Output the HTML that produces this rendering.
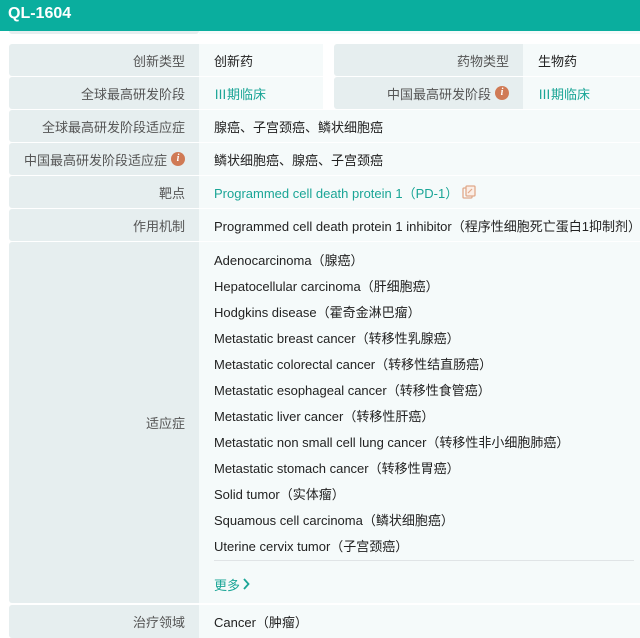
<!DOCTYPE html>
<html><head><meta charset="utf-8"><style>
*{margin:0;padding:0;box-sizing:border-box}
body{width:640px;height:636px;overflow:hidden;background:#fff;font-family:"Liberation Sans","Noto Sans CJK SC",sans-serif;font-size:13px;color:#222;position:relative}
.hdr{position:absolute;left:0;top:0;width:640px;height:31px;background:#0aae9e;color:#fff;font-weight:bold;font-size:16px;line-height:28px;padding-left:8px}
.strip{position:absolute;top:31px;left:9px;width:190px;height:3px;background:#e6eeef;border-radius:0 0 3px 3px}
.strip2{position:absolute;top:31px;left:199px;width:441px;height:3px;background:#f5fafa}
.c{position:absolute;display:flex;align-items:center}
.l{background:#e6eeef;justify-content:flex-end;padding-right:14px;color:#555;border-radius:3px 0 0 3px}
.v{background:#f5fafa;padding-left:15px}
.t{color:#1aa596}
.i{display:inline-block;width:14px;height:14px;border-radius:50%;background:#d07a55;color:#fff;font-size:10px;font-style:italic;font-weight:bold;text-align:center;line-height:14px;margin-left:4px;font-family:"Liberation Serif",serif}
.list div{position:absolute;left:214px}
</style></head><body>
<div class="hdr">QL-1604</div>
<div class="strip"></div><div class="strip2"></div>

<div class="c l" style="left:9px;top:44px;width:190px;height:32px">创新类型</div>
<div class="c v" style="left:199px;top:44px;width:124px;height:32px">创新药</div>
<div class="c l" style="left:334px;top:44px;width:189px;height:32px">药物类型</div>
<div class="c v" style="left:523px;top:44px;width:117px;height:32px">生物药</div>

<div class="c l" style="left:9px;top:77px;width:190px;height:32px">全球最高研发阶段</div>
<div class="c v t" style="left:199px;top:77px;width:124px;height:32px">Ⅲ期临床</div>
<div class="c l" style="left:334px;top:77px;width:189px;height:32px">中国最高研发阶段<span class="i">i</span></div>
<div class="c v t" style="left:523px;top:77px;width:117px;height:32px">Ⅲ期临床</div>

<div class="c l" style="left:9px;top:110px;width:190px;height:32px">全球最高研发阶段适应症</div>
<div class="c v" style="left:199px;top:110px;width:441px;height:32px">腺癌、子宫颈癌、鳞状细胞癌</div>

<div class="c l" style="left:9px;top:143px;width:190px;height:32px">中国最高研发阶段适应症<span class="i">i</span></div>
<div class="c v" style="left:199px;top:143px;width:441px;height:32px">鳞状细胞癌、腺癌、子宫颈癌</div>

<div class="c l" style="left:9px;top:176px;width:190px;height:32px">靶点</div>
<div class="c v t" style="left:199px;top:176px;width:441px;height:32px">Programmed cell death protein 1（PD-1）<svg width="14" height="14" viewBox="0 0 14 14" style="margin-left:4px"><rect x="1" y="3" width="9" height="10" rx="1" fill="none" stroke="#e0a98a" stroke-width="1.3"/><rect x="4" y="1" width="9" height="10" rx="1" fill="#fbeee6" stroke="#e0a98a" stroke-width="1.3"/><path d="M6 8l4-4" stroke="#e0a98a" stroke-width="1.2"/></svg></div>

<div class="c l" style="left:9px;top:209px;width:190px;height:32px">作用机制</div>
<div class="c v" style="left:199px;top:209px;width:441px;height:32px">Programmed cell death protein 1 inhibitor（程序性细胞死亡蛋白1抑制剂）</div>

<div class="c l" style="left:9px;top:242px;width:190px;height:361px">适应症</div>
<div class="c v" style="left:199px;top:242px;width:441px;height:361px"></div>
<div class="list">
<div style="top:250px">Adenocarcinoma（腺癌）</div>
<div style="top:276px">Hepatocellular carcinoma（肝细胞癌）</div>
<div style="top:302px">Hodgkins disease（霍奇金淋巴瘤）</div>
<div style="top:328px">Metastatic breast cancer（转移性乳腺癌）</div>
<div style="top:354px">Metastatic colorectal cancer（转移性结直肠癌）</div>
<div style="top:380px">Metastatic esophageal cancer（转移性食管癌）</div>
<div style="top:406px">Metastatic liver cancer（转移性肝癌）</div>
<div style="top:432px">Metastatic non small cell lung cancer（转移性非小细胞肺癌）</div>
<div style="top:458px">Metastatic stomach cancer（转移性胃癌）</div>
<div style="top:484px">Solid tumor（实体瘤）</div>
<div style="top:510px">Squamous cell carcinoma（鳞状细胞癌）</div>
<div style="top:536px">Uterine cervix tumor（子宫颈癌）</div>
<div style="top:560px;width:420px;height:1px;background:#e0e4e6"></div>
<div style="top:575px;color:#1aa596">更多<svg width="8" height="12" viewBox="0 0 8 12" style="margin-left:2px"><path d="M2 1l4.5 5L2 11" fill="none" stroke="#1aa596" stroke-width="1.8"/></svg></div>
</div>

<div class="c l" style="left:9px;top:605px;width:190px;height:33px">治疗领域</div>
<div class="c v" style="left:199px;top:605px;width:441px;height:33px">Cancer（肿瘤）</div>
</body></html>
